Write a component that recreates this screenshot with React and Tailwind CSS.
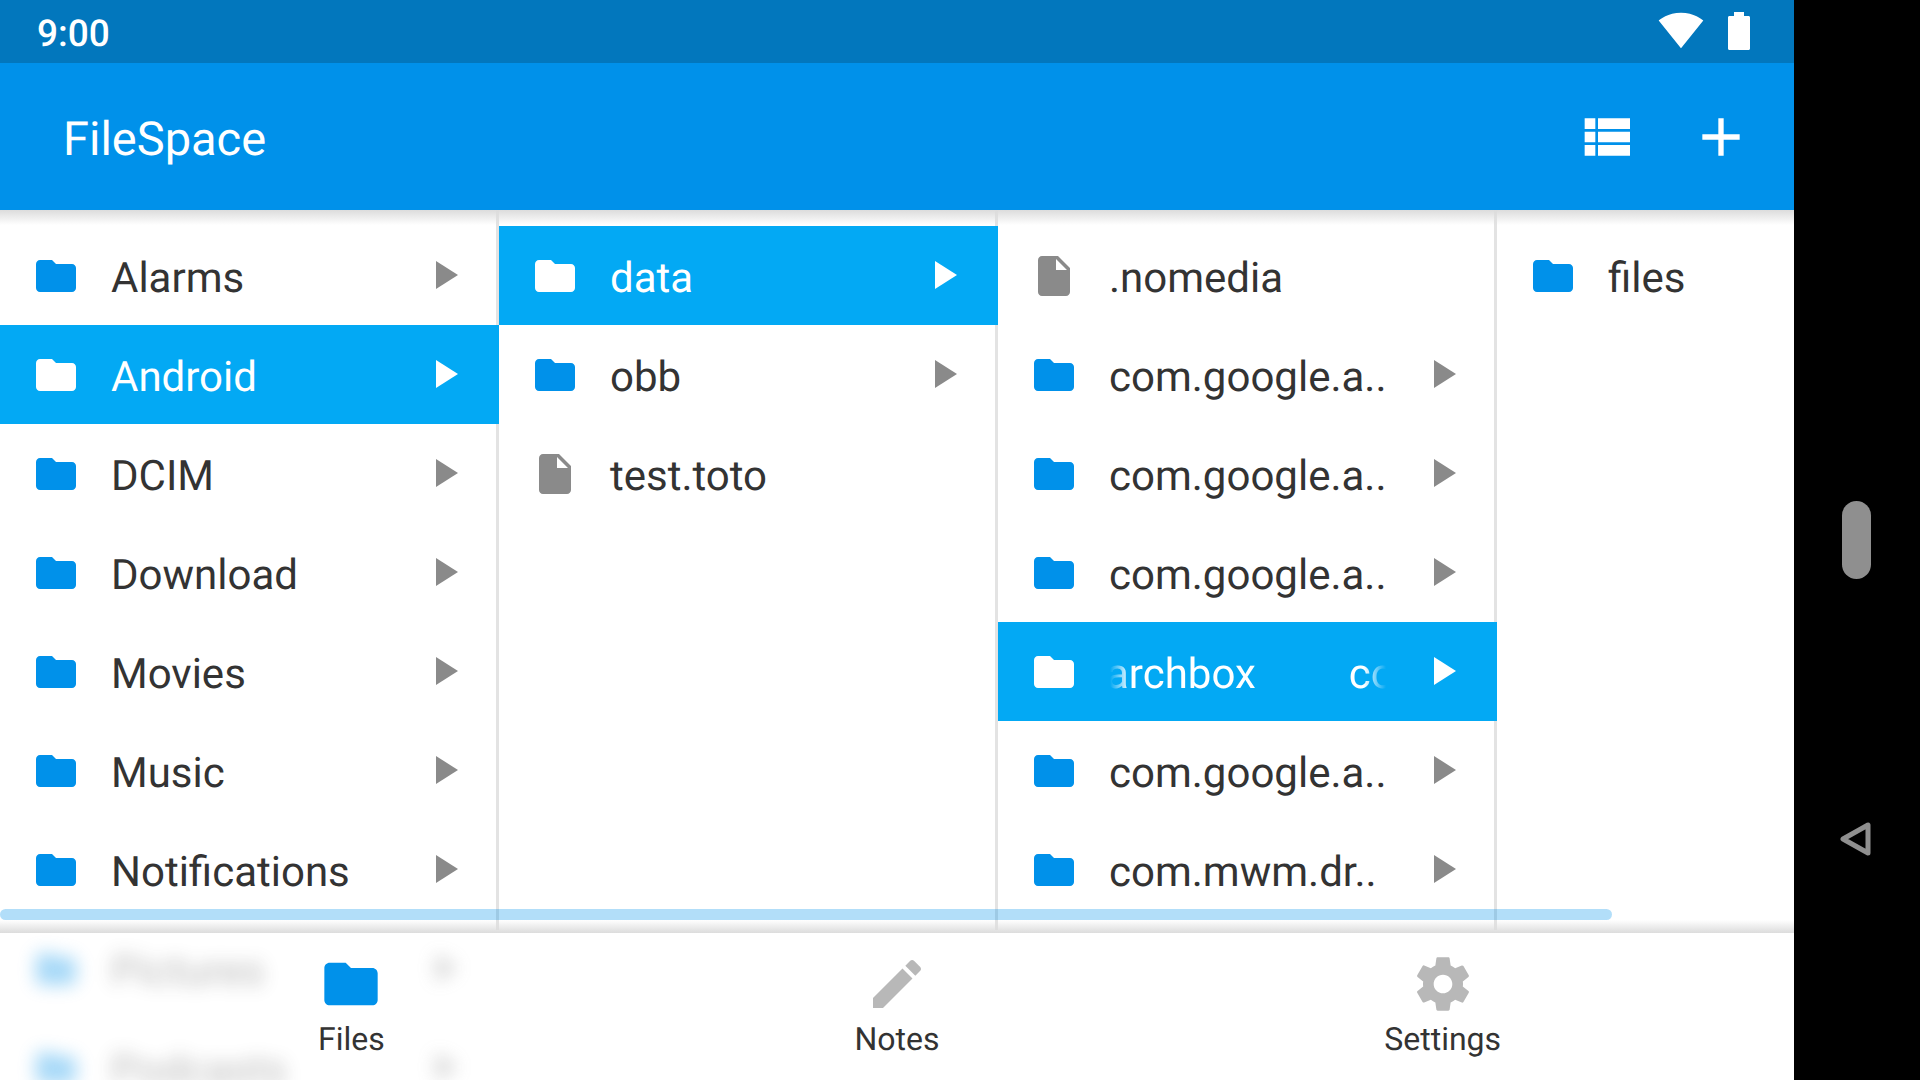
const FOLDER = 'M10 4H4c-1.1 0-1.99.9-1.99 2L2 18c0 1.1.9 2 2 2h16c1.1 0 2-.9 2-2V8c0-1.1-.9-2-2-2h-8l-2-2z'
const FILE = 'M6 2c-1.1 0-1.99.9-1.99 2L4 20c0 1.1.89 2 1.99 2H18c1.1 0 2-.9 2-2V8l-6-6H6zm7 7V3.5L18.5 9H13z'
const ARROW = 'M8 5v14l11-7z'
const EDIT = 'M3 17.25V21h3.75L17.81 9.94l-3.75-3.75L3 17.25zM20.71 7.04c.39-.39.39-1.02 0-1.41l-2.34-2.34c-.39-.39-1.02-.39-1.41 0l-1.83 1.83 3.75 3.75 1.83-1.83z'
const GEAR = 'M19.43 12.98c.04-.32.07-.64.07-.98s-.03-.66-.07-.98l2.11-1.65c.19-.15.24-.42.12-.64l-2-3.46c-.12-.22-.39-.3-.61-.22l-2.49 1c-.52-.4-1.08-.73-1.69-.98l-.38-2.65C14.46 2.18 14.25 2 14 2h-4c-.25 0-.46.18-.49.42l-.38 2.65c-.61.25-1.17.59-1.69.98l-2.49-1c-.23-.09-.49 0-.61.22l-2 3.46c-.13.22-.07.49.12.64l2.11 1.65c-.04.32-.07.65-.07.98s.03.66.07.98l-2.11 1.65c-.19.15-.24.42-.12.64l2 3.46c.12.22.39.3.61.22l2.49-1c.52.4 1.08.73 1.69.98l.38 2.65c.03.24.24.42.49.42h4c.25 0 .46-.18.49-.42l.38-2.65c.61-.25 1.17-.59 1.69-.98l2.49 1c.23.09.49 0 .61-.22l2-3.46c.12-.22.07-.49-.12-.64l-2.11-1.65zM12 15.5c-1.93 0-3.5-1.57-3.5-3.5s1.57-3.5 3.5-3.5 3.5 1.57 3.5 3.5-1.57 3.5-3.5 3.5z'

function Icon({ d, className }) {
  return (
    <svg viewBox="0 0 24 24" className={className} fill="currentColor">
      <path d={d} />
    </svg>
  )
}

function Row({ name, file, open, selected, marquee }) {
  const iconColor = selected ? 'text-white' : file ? 'text-[#8a8a8a]' : 'text-[#0091ea]'
  return (
    <div className={`relative flex h-[99px] items-center pl-8 ${selected ? 'bg-[#03a9f4] text-white' : 'text-[#333333]'}`}>
      <Icon d={file ? FILE : FOLDER} className={`h-12 w-12 shrink-0 ${iconColor}`} />
      {marquee ? (
        <div className="mt-[7px] ml-8 flex w-[276px] overflow-hidden whitespace-nowrap text-[42px] leading-[50px] [mask-image:linear-gradient(90deg,transparent,black_20px,black_254px,transparent)]">
          <span className="-ml-[4px]">archbox</span>
          <span className="ml-[93px]">com</span>
        </div>
      ) : (
        <div className="mt-[7px] ml-[31px] whitespace-nowrap text-[42px] leading-[50px]">{name}</div>
      )}
      {open && (
        <div className="absolute top-[25px] left-[420px]">
          <Icon d={ARROW} className={`h-12 w-12 ${selected ? 'text-white' : 'text-[#8a8a8a]'}`} />
        </div>
      )}
    </div>
  )
}

function Column({ rows, last }) {
  return (
    <div className={`h-full pt-4 ${last ? 'w-[297px]' : 'w-[499px] border-r-[3px] border-[#e3e3e3]'}`}>
      <div className={last ? '' : '-mr-[3px]'}>
        {rows.map(r => (
          <Row key={r.key || r.name} {...r} />
        ))}
      </div>
    </div>
  )
}

const storage = [
  { name: 'Alarms', open: true },
  { name: 'Android', open: true, selected: true },
  { name: 'DCIM', open: true },
  { name: 'Download', open: true },
  { name: 'Movies', open: true },
  { name: 'Music', open: true },
  { name: 'Notifications', open: true },
]

const android = [
  { name: 'data', open: true, selected: true },
  { name: 'obb', open: true },
  { name: 'test.toto', file: true },
]

const data = [
  { name: '.nomedia', file: true },
  { key: 'g1', name: 'com.google.a..', open: true },
  { key: 'g2', name: 'com.google.a..', open: true },
  { key: 'g3', name: 'com.google.a..', open: true },
  { key: 'arch', marquee: true, open: true, selected: true },
  { key: 'g4', name: 'com.google.a..', open: true },
  { name: 'com.mwm.dr..', open: true },
]

const tabs = [
  { label: 'Files', d: FOLDER, color: 'text-[#0091ea]' },
  { label: 'Notes', d: EDIT, color: 'text-[#b8b8b8]' },
  { label: 'Settings', d: GEAR, color: 'text-[#b8b8b8]' },
]

export default function App() {
  return (
    <div className="flex h-[1080px] w-[1920px] overflow-hidden bg-black font-['Roboto',sans-serif] [text-rendering:geometricPrecision]">
      <div className="flex w-[1794px] flex-col bg-white">
        {/* status bar */}
        <div className="flex h-[63px] items-center bg-[#0277bd] pr-[44px] pl-[37px] text-white">
          <span className="mt-[7px] text-[37px] leading-[42px] font-medium">9:00</span>
          <svg viewBox="0 0 24 24" className="mt-[-3px] ml-auto h-[46px] w-[46px]" fill="currentColor">
            <path d="M12.01 21.49L23.64 7c-.45-.34-4.93-4-11.64-4C5.28 3 .81 6.66.36 7l11.63 14.49.01.01.01-.01z" />
          </svg>
          <svg viewBox="0 0 22 38" className="mt-[-1px] ml-[24px] h-[38px] w-[22px]" fill="currentColor">
            <path d="M6 0h10v4h4.5C21.4 4 22 4.6 22 5.5v31c0 .9-.6 1.5-1.5 1.5h-19C.6 38 0 37.4 0 36.5v-31C0 4.6.6 4 1.5 4H6z" />
          </svg>
        </div>

        {/* app bar */}
        <div className="flex h-[147px] items-center bg-[#0091ea] pr-[41px] pl-[63px] text-white">
          <span className="mt-[7px] text-[47px] leading-[56px]">FileSpace</span>
          <svg viewBox="0 0 24 24" className="ml-auto h-16 w-16" fill="currentColor">
            <path d="M4 14h4v-4H4v4zm0 5h4v-4H4v4zM4 9h4V5H4v4zm5 5h12v-4H9v4zm0 5h12v-4H9v4zM9 5v4h12V5H9z" />
          </svg>
          <svg viewBox="0 0 24 24" className="ml-[51px] h-16 w-16" fill="currentColor">
            <path d="M19 13h-6v6h-2v-6H5v-2h6V5h2v6h6v2z" />
          </svg>
        </div>

        {/* columns */}
        <div className="relative h-[723px] overflow-hidden">
          <div className="flex h-[720px]">
            <Column rows={storage} />
            <Column rows={android} />
            <Column rows={data} />
            <Column rows={[{ name: 'files' }]} last />
          </div>
          <div className="pointer-events-none absolute inset-x-0 top-0 h-[15px] bg-gradient-to-b from-[#dcdcdc] to-transparent" />
          <div className="pointer-events-none absolute inset-x-0 bottom-0 h-[13px] bg-gradient-to-t from-[#dcdcdc] to-transparent" />
          <div className="absolute top-[699px] left-0 h-[11px] w-[1612px] rounded-full bg-[#0091ea]/30" />
        </div>

        {/* bottom nav */}
        <div className="relative h-[147px] overflow-hidden bg-white">
          <div className="absolute -top-[14px] left-0 w-[499px] opacity-35 blur-[9px]">
            <Row name="Pictures" open />
            <Row name="Podcasts" open />
          </div>
          <div className="relative grid grid-cols-3 px-[78.5px] pt-[19px]">
            {tabs.map(t => (
              <div key={t.label} className="flex flex-col items-center">
                <Icon d={t.d} className={`h-16 w-16 ${t.color}`} />
                <span className="mt-[4px] text-[32px] leading-[38px] text-[#333333]">{t.label}</span>
              </div>
            ))}
          </div>
        </div>
      </div>

      {/* device nav */}
      <div className="flex w-[126px] flex-col items-center pt-[501px] pr-px">
        <div className="h-[78px] w-[29px] rounded-full bg-[#8f8f8f]" />
        <svg viewBox="0 0 32 34" className="mt-[243px] mr-[2px] h-[34px] w-[32px]" fill="none" stroke="#8f8f8f" strokeWidth="5" strokeLinejoin="round">
          <path d="M28 3v28L3 17z" />
        </svg>
      </div>
    </div>
  )
}
